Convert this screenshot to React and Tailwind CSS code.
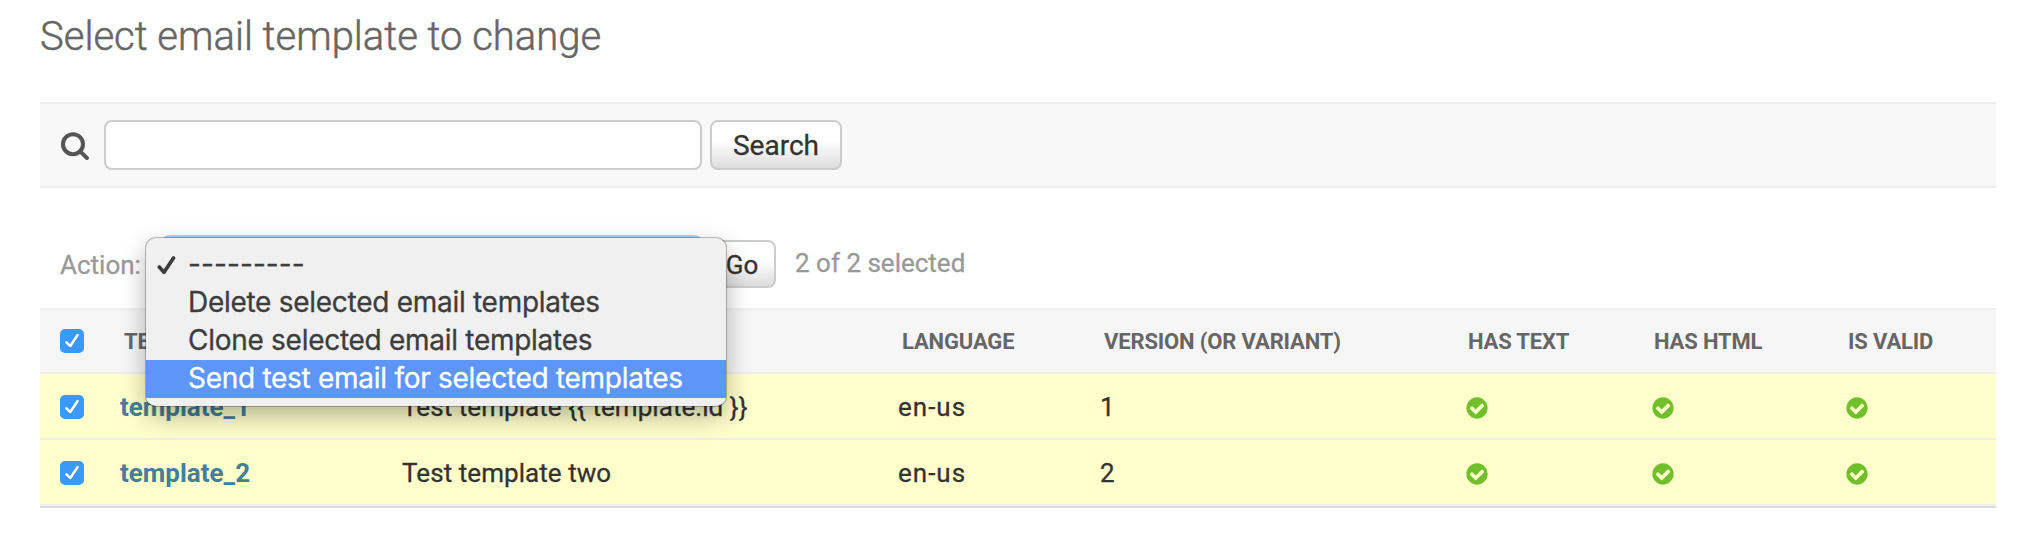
const GRID =
  "grid grid-cols-[80px_282px_496px_202px_366px_186px_194px_1fr] items-center";

const ROWS = [
  { name: "template_1", description: "Test template {{ template.id }}", language: "en-us", version: "1" },
  { name: "template_2", description: "Test template two", language: "en-us", version: "2" },
];

function Checkbox() {
  return (
    <svg className="ml-5 size-6" viewBox="0 0 24 24">
      <rect width="24" height="24" rx="5" fill="#3b99fc" />
      <path d="M6.5 14.5 L10.2 18.3 L17.7 7" fill="none" stroke="#1f6fc4" strokeOpacity="0.5" strokeWidth="2.4" strokeLinecap="round" strokeLinejoin="round" />
      <path d="M6.4 13.4 L10.2 17.2 L17.5 6.2" fill="none" stroke="#fff" strokeWidth="2.6" strokeLinecap="round" strokeLinejoin="round" />
    </svg>
  );
}

function YesIcon() {
  return (
    <svg className="size-[22px]" viewBox="0 0 1792 1792">
      <path
        fill="#70bf2b"
        transform="translate(-117 -117) scale(1.1306)"
        d="M1412 734q0-28-18-46l-91-90q-19-19-45-19t-45 19l-408 407-226-226q-19-19-45-19t-45 19l-91 90q-18 18-18 46 0 27 18 45l362 362q19 19 45 19 27 0 46-19l543-543q18-18 18-45zm252 162q0 209-103 385.500t-279.500 279.500-385.500 103-385.500-103-279.500-279.500-103-385.500 103-385.500 279.500-279.500 385.500-103 385.500 103 279.500 279.500 103 385.500z"
      />
    </svg>
  );
}

function SearchIcon() {
  return (
    <svg className="ml-5 size-[30px] shrink-0" viewBox="0 0 30 30">
      <circle cx="13" cy="14.2" r="10" fill="none" stroke="#555" strokeWidth="4" />
      <path d="M20.2 21.4 L26.9 28" stroke="#555" strokeWidth="4" strokeLinecap="round" />
    </svg>
  );
}

function MenuItem({ children, active, checked }) {
  return (
    <div
      className={
        active
          ? "flex h-[38px] items-center bg-[#5d96f8] text-white"
          : "flex h-[38px] items-center text-[#3d3d3d]"
      }
    >
      <span className="w-[42px] shrink-0">
        {checked && (
          <svg className="ml-[11px] size-[19px]" viewBox="0 0 19 19">
            <path d="M2.3 11 L7 16.2 L16.5 2" fill="none" stroke="#3d3d3d" strokeWidth="3.7" strokeLinecap="round" strokeLinejoin="round" />
          </svg>
        )}
      </span>
      <span className={checked ? "pb-0.5 tracking-[0.1px] whitespace-pre" : "pb-0.5 whitespace-pre"}>{children}</span>
    </div>
  );
}

export default function App() {
  return (
    <main className="h-[534px] w-[2044px] overflow-hidden bg-white px-10 pr-12 font-[Roboto,sans-serif] text-[#333] [-webkit-text-stroke:0.3px_currentColor]">
      <h1 className="flex h-[102px] items-start pt-[13px] text-[40px] leading-[48px] font-light text-[#666] [-webkit-text-stroke:0.5px_currentColor]">
        Select email template to change
      </h1>

      <form className="flex h-[86px] items-center border-y-2 border-[#eee] bg-[#f8f8f8]">
        <SearchIcon />
        <input className="ml-3.5 h-[50px] w-[598px] rounded-lg border-2 border-[#ccc] bg-white outline-none" />
        <button
          type="button"
          className="ml-2 h-[50px] w-[132px] rounded-lg border-2 border-[#ccc] bg-linear-to-b from-white from-40% to-[#ddd] pt-0.5 text-[28px] leading-[44px]"
        >
          Search
        </button>
      </form>

      <section className="relative flex h-[120px] items-start pt-[52px] text-[26px] text-[#999]">
        <label className="ml-5 h-12 w-[86px] leading-[50px]">Action:</label>
        <div className="-mt-[5px] ml-[14px] h-[54px] w-[544px] rounded-[10px] bg-[#b0d2f3]" />
        <button
          type="button"
          className="ml-1 h-12 w-[68px] rounded-lg border-2 border-[#ccc] bg-linear-to-b from-white from-40% to-[#ddd] text-[26px] leading-[46px] text-[#333]"
        >
          Go
        </button>
        <span className="ml-[19px] leading-[46px]">2 of 2 selected</span>

        <div className="absolute top-[50px] left-[106px] z-10 h-[168px] w-[580px] rounded-[10px] bg-[#f0f0f0] pt-2 font-[Inter,sans-serif] text-[28px] tracking-[-0.28px] shadow-[0_0_0_1px_rgba(0,0,0,0.25),0_10px_26px_rgba(0,0,0,0.3)]">
          <MenuItem checked>---------</MenuItem>
          <MenuItem>Delete selected email templates</MenuItem>
          <MenuItem>Clone selected email templates</MenuItem>
          <MenuItem active>Send test email for selected templates</MenuItem>
        </div>
      </section>

      <div className="border-b-2 border-[#ddd] text-[26px]">
        <div className={`${GRID} h-[66px] border-y-2 border-[#eee] bg-[#f6f6f6] text-[22px] leading-[30px] font-bold tracking-[-0.15px] text-[#666] [-webkit-text-stroke:0px]`}>
          <Checkbox />
          <span className="pt-0.5 pl-1">TEMPLATE</span>
          <span className="pt-0.5 pl-1">DESCRIPTION</span>
          <span className="pt-0.5 pl-1">LANGUAGE</span>
          <span className="pt-0.5 pl-1">VERSION (OR VARIANT)</span>
          <span className="pt-0.5 pl-0.5">HAS TEXT</span>
          <span className="pt-0.5 pl-0.5">HAS HTML</span>
          <span className="pt-0.5 pl-0.5">IS VALID</span>
        </div>
        {ROWS.map((row) => (
          <div key={row.name} className={`${GRID} h-[66px] border-b-2 border-[#eee] bg-[#ffc] pt-0.5 leading-[30px]`}>
            <Checkbox />
            <a className="font-bold text-[#447e9b] [-webkit-text-stroke:0px]">{row.name}</a>
            <span className="tracking-[0.06px]">{row.description}</span>
            <span className="tracking-[1px]">{row.language}</span>
            <span>{row.version}</span>
            <div className="pt-0.5"><YesIcon /></div>
            <div className="pt-0.5"><YesIcon /></div>
            <div className="pt-0.5"><YesIcon /></div>
          </div>
        ))}
      </div>
    </main>
  );
}
